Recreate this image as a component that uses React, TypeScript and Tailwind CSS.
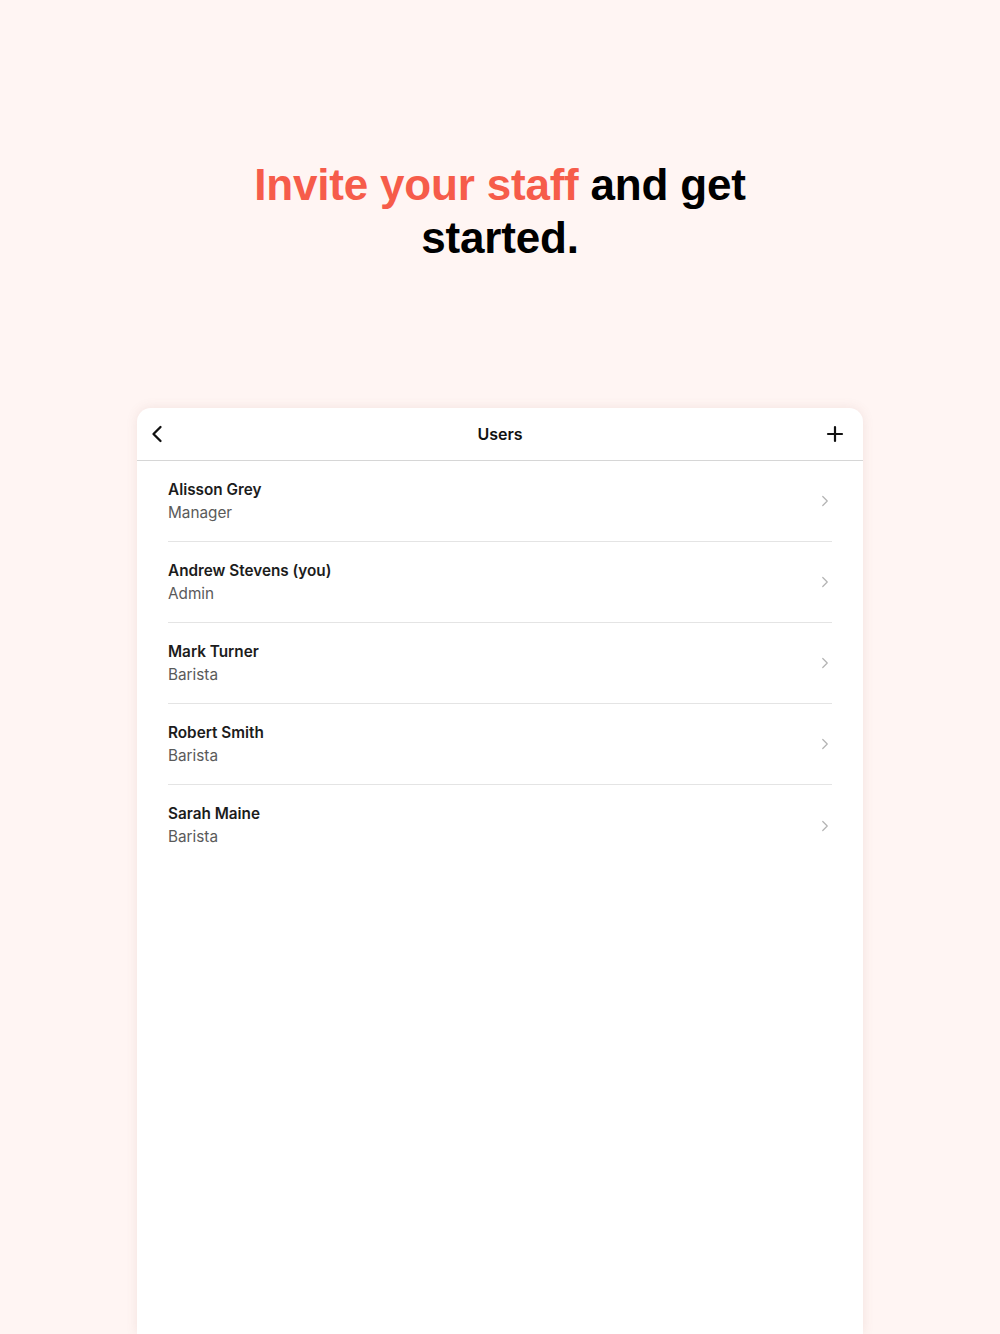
import { ChevronLeft, ChevronRight, Plus } from "lucide-react";

const users = [
  { name: "Alisson Grey", role: "Manager" },
  { name: "Andrew Stevens (you)", role: "Admin" },
  { name: "Mark Turner", role: "Barista" },
  { name: "Robert Smith", role: "Barista" },
  { name: "Sarah Maine", role: "Barista" },
];

export default function App() {
  return (
    <div className="h-[1334px] w-full overflow-hidden bg-[#fff5f3] flex flex-col items-center font-['Liberation_Sans',Arial,sans-serif]">
      <h1 className="mt-[158px] w-[520px] text-center text-[44px] leading-[53px] font-bold tracking-[-0.2px] text-black">
        <span className="text-[#f65c4a]">Invite your staff</span> and get started.
      </h1>

      <div className="mt-[144px] w-[726px] flex-1 bg-white rounded-t-[14px] shadow-[0_0_12px_rgba(150,90,80,0.12)] font-['Inter',sans-serif]">
        <div className="h-[53px] grid grid-cols-[44px_1fr_44px] items-center px-[6px] border-b border-[#d6d6d6]">
          <ChevronLeft className="w-[28px] h-[28px] text-[#111]" strokeWidth={2} />
          <span className="text-center text-[16px] font-semibold text-[#111]">Users</span>
          <Plus className="justify-self-end w-[24px] h-[24px] text-[#111] mr-[10px]" strokeWidth={2.2} />
        </div>

        <ul className="pl-[31px] pr-[31px]">
          {users.map((u) => (
            <li
              key={u.name}
              className="h-[81px] flex items-center justify-between border-b border-[#e4e4e4] last:border-b-0"
            >
              <div className="flex flex-col gap-[3px]">
                <span className="text-[15.3px] leading-[20px] font-semibold text-[#1c1c1c]">{u.name}</span>
                <span className="text-[15.3px] leading-[20px] text-[#5a5a5a]">{u.role}</span>
              </div>
              <ChevronRight className="w-[18px] h-[18px] text-[#b3b3b3] mr-[-2px]" strokeWidth={1.6} />
            </li>
          ))}
        </ul>
      </div>
    </div>
  );
}
